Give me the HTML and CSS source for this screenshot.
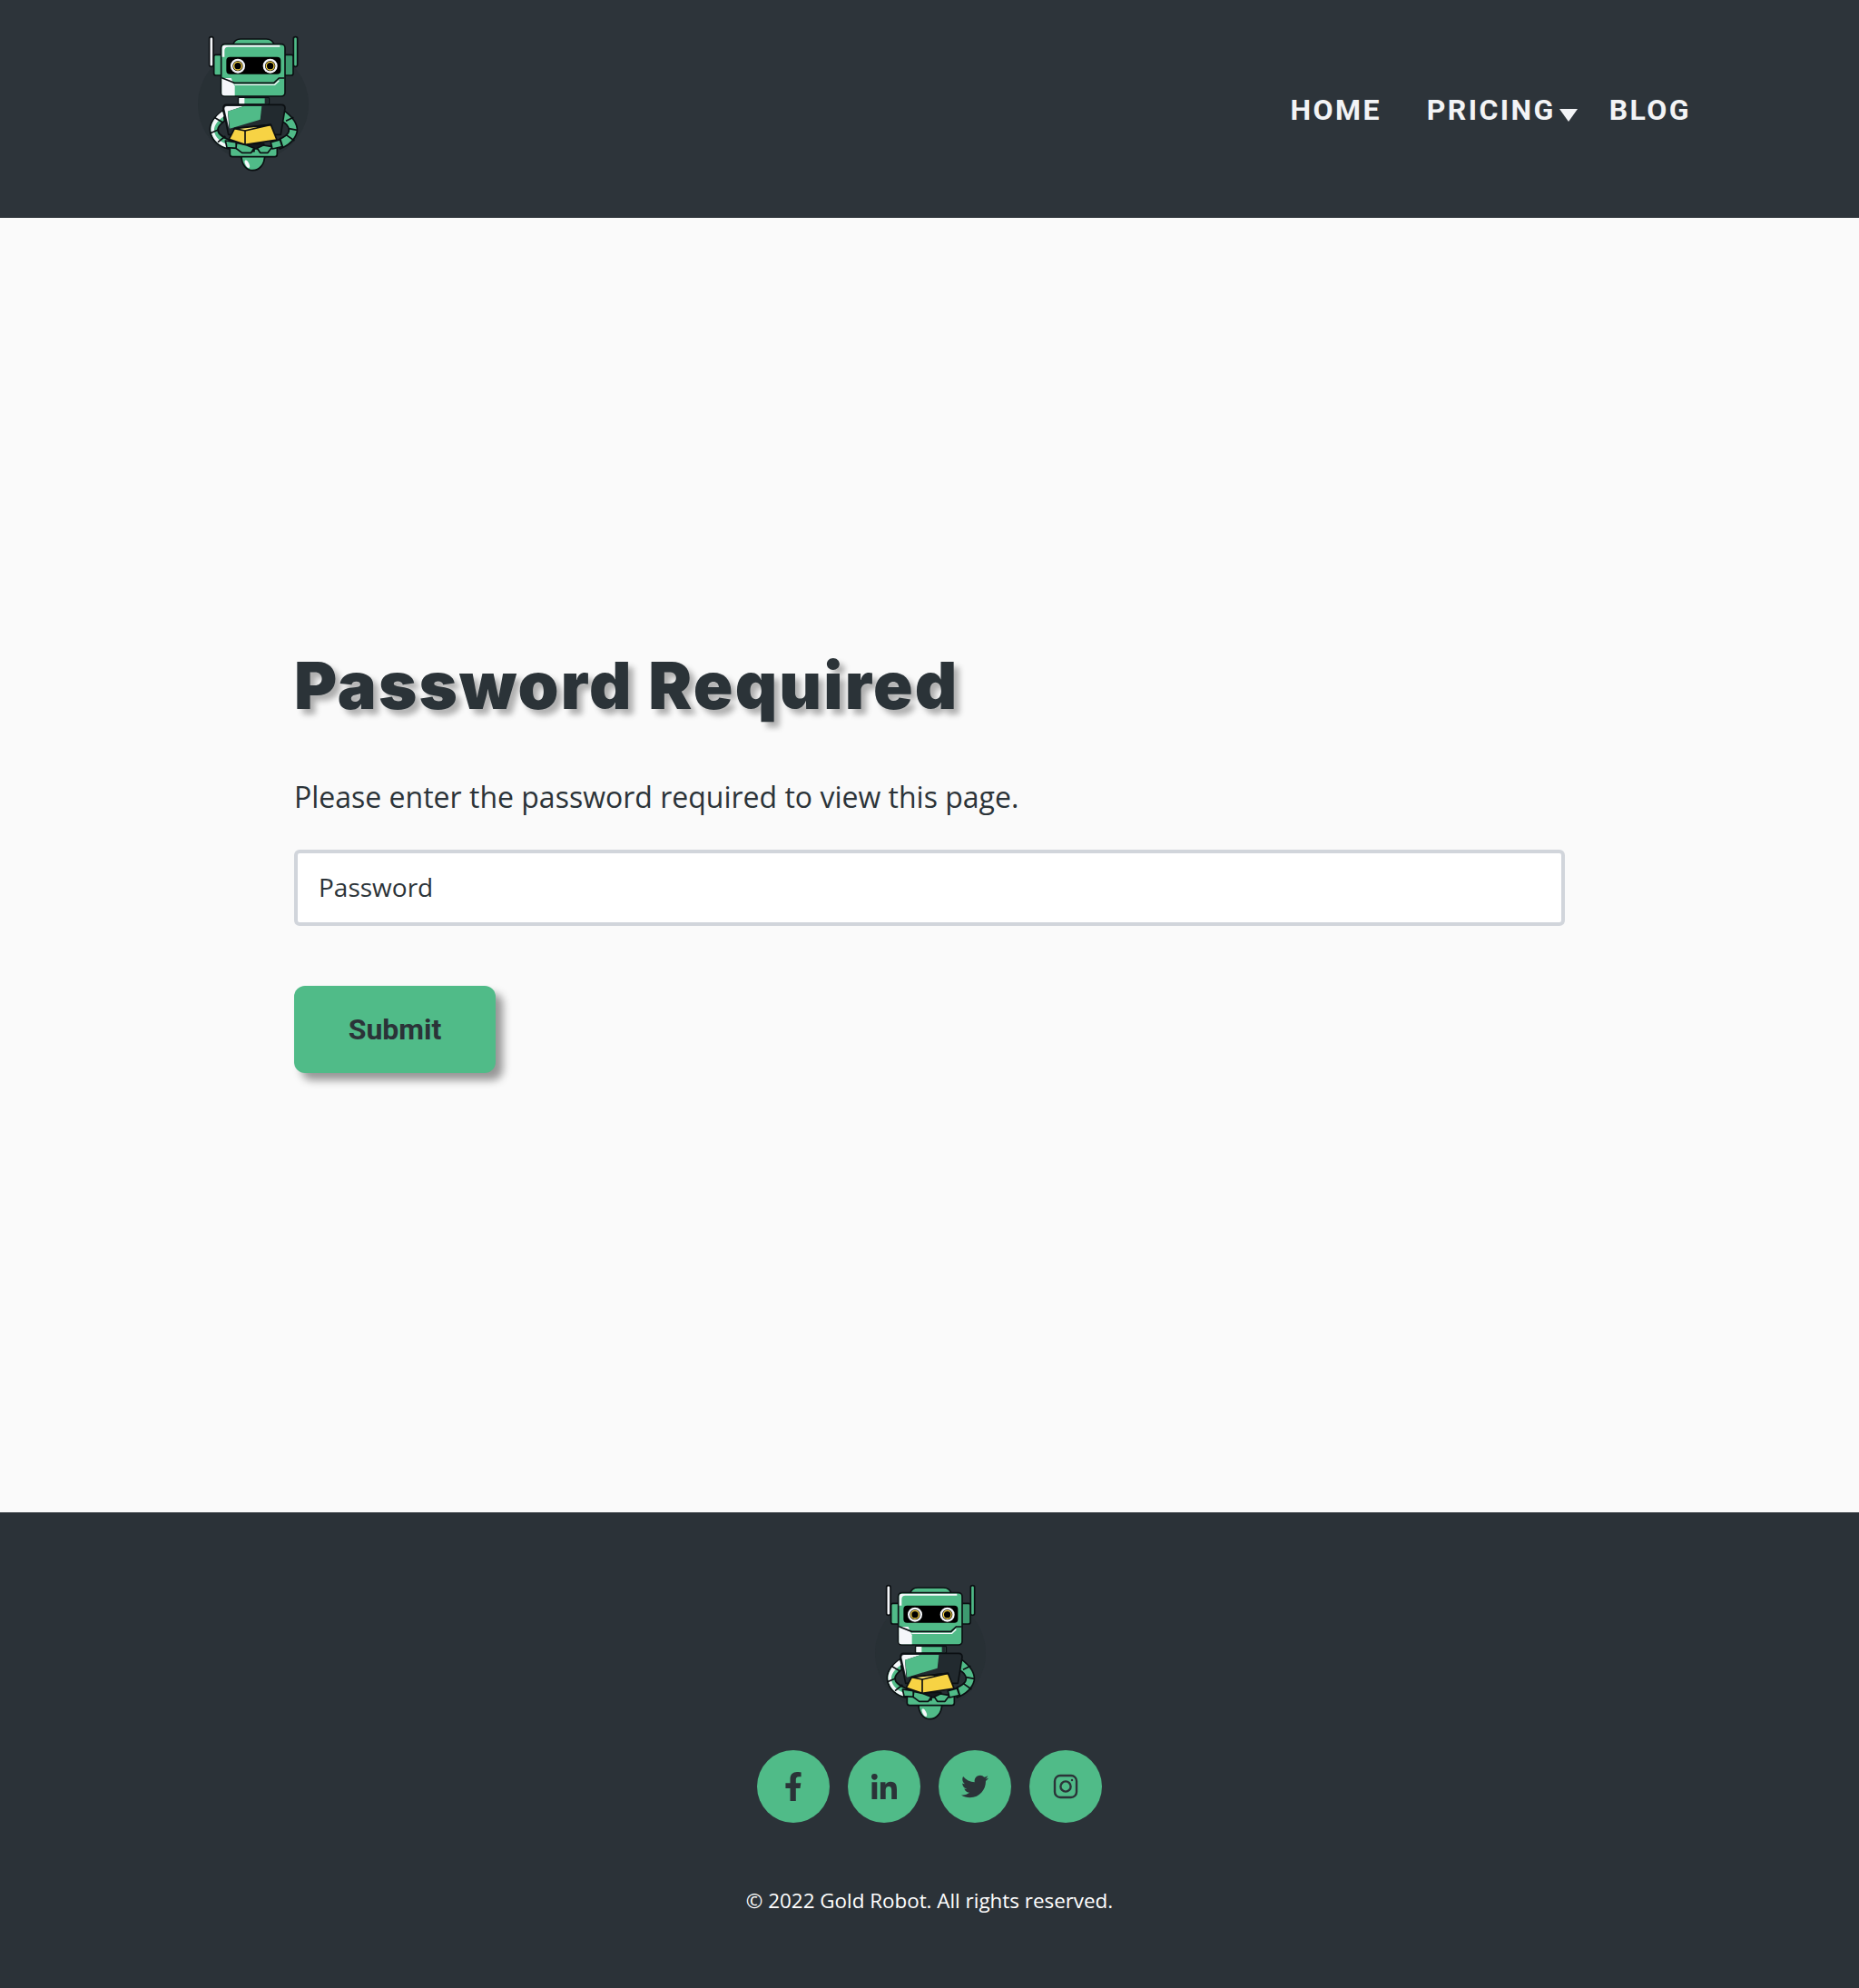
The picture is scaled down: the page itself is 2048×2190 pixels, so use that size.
FILE: index.html
```html
<!DOCTYPE html>
<html lang="en">
<head>
    <meta charset="UTF-8">
    <meta name="viewport" content="width=device-width, initial-scale=1.0">
    <title>Password Required - Gold Robot</title>
    <link rel="stylesheet" href="styles.css">
</head>
<body>

    <!-- Robot logo, used in the header and the footer -->
    <svg class="defs" width="0" height="0">
        <symbol id="robot" viewBox="0 0 540 540">
            <circle cx="267" cy="285" r="183" fill="#283035"/>
            <g stroke="#0b0f12" stroke-width="5" stroke-linejoin="round">
                <!-- antennas -->
                <rect x="122" y="62" width="13" height="98" rx="6" fill="#f5f7fa"/>
                <rect x="400" y="62" width="13" height="98" rx="6" fill="#50bb88"/>
                <!-- ears -->
                <rect x="137" y="121" width="30" height="68" rx="6" fill="#50bb88"/>
                <rect x="369" y="121" width="30" height="68" rx="6" fill="#3d9a70"/>
                <!-- head -->
                <path d="M200 88 Q205 69 225 69 H310 Q330 69 336 88 Z" fill="#50bb88"/>
                <rect x="161" y="86" width="211" height="172" rx="12" fill="#50bb88"/>
            </g>
            <path d="M164 128 V98 Q164 89 173 89 H355 V95 H184 Q172 95 172 107 V128 Z" fill="#f5f7fa"/>
            <path d="M163 198 H194 L206 226 V256 H170 Q163 256 163 249 Z" fill="#f5f7fa"/>
            <rect x="178" y="128" width="180" height="57" rx="12" fill="#000"/>
            <path d="M163 197 L205 214 H335 L352 198 H370" fill="none" stroke="#0b0f12" stroke-width="5"/>
            <path d="M205 220 H338 L352 206" fill="none" stroke="#f5f7fa" stroke-width="4"/>
            <!-- eyes -->
            <circle cx="216" cy="158" r="24" fill="#f5f7fa"/>
            <circle cx="216" cy="158" r="17" fill="#000"/>
            <circle cx="216" cy="158" r="13" fill="none" stroke="#f7d344" stroke-width="4"/>
            <circle cx="323" cy="158" r="24" fill="#f5f7fa"/>
            <circle cx="323" cy="158" r="17" fill="#000"/>
            <circle cx="323" cy="158" r="13" fill="none" stroke="#f7d344" stroke-width="4"/>
            <g stroke="#0b0f12" stroke-width="5" stroke-linejoin="round">
                <!-- neck -->
                <rect x="218" y="262" width="101" height="23" rx="4" fill="#50bb88"/>
                <path d="M220 264 H238 V283 H220 Z" fill="#f5f7fa" stroke="none"/>
                <path d="M305 264 H317 V283 H305 Z" fill="#222a2f" stroke="none"/>
                <!-- ball and pelvis -->
                <path d="M228 452 C226 520 305 520 305 452 Z" fill="#50bb88"/>
                <path d="M190 425 V450 Q190 458 198 458 H338 Q346 458 346 450 V425 Z" fill="#50bb88"/>
                <!-- arms -->
                <path d="M167 305 C140 325 120 350 125 375 C130 405 155 425 185 432 L192 405 C170 395 150 385 150 370 C150 355 165 345 172 340 Z" fill="#50bb88"/>
                <path d="M368 305 C395 325 415 350 412 375 C405 405 385 420 355 432 L345 405 C370 392 385 385 385 370 C385 355 370 345 360 340 Z" fill="#50bb88"/>
            </g>
            <path d="M165 308 C140 326 124 350 128 375 C133 405 158 423 183 429 L186 419 C160 410 140 395 138 372 C136 352 155 335 170 324 Z" fill="#f5f7fa"/>
            <path d="M138 328 L167 345 M125 380 L153 368 M150 410 L175 390 M180 430 L185 405 M375 340 L400 328 M385 365 L412 370 M375 385 L403 405 M355 395 L365 428" fill="none" stroke="#0b0f12" stroke-width="5"/>
            <!-- body -->
            <path d="M178 286 H360 Q372 286 372 298 L358 385 H185 L168 298 Q168 286 178 286 Z" fill="#222a2f" stroke="#0b0f12" stroke-width="5" stroke-linejoin="round"/>
            <path d="M172 300 Q172 291 180 291 H235 L183 308 L187 365 Z" fill="#f5f7fa"/>
            <path d="M183 308 L235 291 H295 L290 335 L190 365 Z" fill="#50bb88"/>
            <ellipse cx="247" cy="482" rx="6" ry="14" transform="rotate(-25 247 482)" fill="#f5f7fa"/>
            <g stroke="#0b0f12" stroke-width="5" stroke-linejoin="round">
                <!-- hands -->
                <path d="M240 415 H302 V432 H270 V440 H240 Z" fill="#141a1e"/>
                <path d="M175 405 L210 410 L213 430 L180 428 Z" fill="#50bb88"/>
                <path d="M210 430 L230 445 H260 L270 430 L240 418 L212 412 Z" fill="#50bb88"/>
                <path d="M280 430 L300 420 L330 425 L315 445 H290 Z" fill="#50bb88"/>
                <path d="M325 410 L355 402 L363 425 L330 432 Z" fill="#50bb88"/>
                <!-- gold bar -->
                <path d="M205 365 L325 352 L345 402 L240 418 L187 400 Z" fill="#f7d344"/>
                <path d="M205 365 L325 352 L240 372 Z" fill="#ffe873"/>
                <path d="M240 372 V418" fill="none"/>
            </g>
        </symbol>
    </svg>

    <header class="site-header">
        <a class="logo" href="#">
            <svg width="180" height="180"><use href="#robot"/></svg>
        </a>
        <nav class="main-nav">
            <a href="#">Home</a>
            <a class="has-menu" href="#">Pricing</a>
            <a href="#">Blog</a>
        </nav>
    </header>

    <main class="content">
        <h1>Password Required</h1>
        <p>Please enter the password required to view this page.</p>
        <form class="password-form">
            <input type="password" name="password" placeholder="Password">
            <button type="submit">Submit</button>
        </form>
    </main>

    <footer class="site-footer">
        <a class="logo" href="#">
            <svg width="180" height="180"><use href="#robot"/></svg>
        </a>
        <div class="social">
            <a href="#" aria-label="Facebook">
                <svg width="32" height="32" viewBox="0 0 512 512"><path transform="translate(96 0)" d="M279.14 288l14.22-92.66h-88.91v-60.13c0-25.35 12.42-50.06 52.24-50.06h40.42V6.26S260.43 0 225.36 0c-73.22 0-121.08 44.38-121.08 124.72v70.62H22.89V288h81.39v224h100.17V288z"/></svg>
            </a>
            <a href="#" aria-label="LinkedIn">
                <svg width="28" height="32" viewBox="0 0 448 512"><path d="M100.28 448H7.4V148.9h92.88zM53.79 108.1C24.09 108.1 0 83.5 0 53.8a53.79 53.79 0 0 1 107.58 0c0 29.7-24.1 54.3-53.79 54.3zM447.9 448h-92.68V302.4c0-34.7-.7-79.2-48.29-79.2-48.29 0-55.69 37.7-55.69 76.7V448h-92.78V148.9h89.08v40.8h1.3c12.4-23.5 42.69-48.3 87.88-48.3 94 0 111.28 61.9 111.28 142.3V448z" transform="translate(0 32)"/></svg>
            </a>
            <a href="#" aria-label="Twitter">
                <svg width="30" height="30" viewBox="0 0 512 512"><path d="M459.37 151.716c.325 4.548.325 9.097.325 13.645 0 138.72-105.583 298.558-298.558 298.558-59.452 0-114.68-17.219-161.137-47.106 8.447.974 16.568 1.299 25.34 1.299 49.055 0 94.213-16.568 130.274-44.832-46.132-.975-84.792-31.188-98.112-72.772 6.498.974 12.995 1.624 19.818 1.624 9.421 0 18.843-1.3 27.614-3.573-48.081-9.747-84.143-51.98-84.143-102.985v-1.299c13.969 7.797 30.214 12.67 47.431 13.319-28.264-18.843-46.781-51.005-46.781-87.391 0-19.492 5.197-37.36 14.294-52.954 51.655 63.675 129.3 105.258 216.365 109.807-1.624-7.797-2.599-15.918-2.599-24.04 0-57.828 46.782-104.934 104.934-104.934 30.213 0 57.502 12.67 76.67 33.137 23.715-4.548 46.456-13.32 66.599-25.34-7.798 24.366-24.366 44.833-46.132 57.827 21.117-2.273 41.584-8.122 60.426-16.243-14.292 20.791-32.161 39.308-52.628 54.253z"/></svg>
            </a>
            <a href="#" aria-label="Instagram">
                <svg width="28" height="28" viewBox="0 0 28 28" fill="none" stroke="#2b3338" stroke-width="2.4"><rect x="2" y="2" width="24" height="24" rx="6"/><circle cx="14" cy="14" r="5.6"/><circle cx="21" cy="7" r="1.2" fill="#2b3338" stroke="none"/></svg>
            </a>
        </div>
        <p class="copyright">© 2022 Gold Robot. All rights reserved.</p>
    </footer>

</body>
</html>
```

FILE: styles.css
```css
body {
    font-family: 'Open Sans', sans-serif;
    margin: 0;
    padding: 0;
    background-color: #fafafa;
    color: #2b3338;
}

.defs {
    position: absolute;
}

.logo {
    display: block;
    line-height: 0;
}

/* Header */
.site-header {
    height: 240px;
    box-sizing: border-box;
    padding: 20px 185px 0 190px;
    display: flex;
    justify-content: space-between;
    align-items: flex-start;
    background-color: #2d343a;
}

.main-nav {
    display: flex;
    gap: 50px;
    margin-top: 82px;
}

.main-nav a {
    font-family: 'Roboto', sans-serif;
    font-size: 32px;
    line-height: 38px;
    font-weight: 700;
    letter-spacing: 2.4px;
    text-transform: uppercase;
    text-decoration: none;
    color: #f3f4f6;
}

.main-nav .has-menu {
    position: relative;
    margin-right: 9px;
}

/* Dropdown arrow */
.main-nav .has-menu::after {
    content: "";
    position: absolute;
    top: 18px;
    left: 100%;
    margin-left: 4px;
    border-left: 10px solid transparent;
    border-right: 10px solid transparent;
    border-top: 14px solid #f3f4f6;
}

/* Main content */
.content {
    height: 1426px;
    box-sizing: border-box;
    padding: 470px 324px 0;
}

.content h1 {
    font-family: 'Inter', sans-serif;
    font-size: 72px;
    line-height: 90px;
    font-weight: 900;
    letter-spacing: 2.2px;
    margin: 0 0 56px;
    text-shadow: 6px 6px 6px rgba(0, 0, 0, 0.3);
}

.content p {
    font-size: 32px;
    line-height: 44px;
    margin: 0 0 36px;
}

.password-form input {
    display: block;
    width: 100%;
    height: 84px;
    box-sizing: border-box;
    padding: 0 23px 2px;
    margin-bottom: 66px;
    font-family: 'Open Sans', sans-serif;
    font-size: 28px;
    color: #2b3338;
    background-color: #fff;
    border: 4px solid #d1d5db;
    border-radius: 6px;
    outline: none;
}

.password-form input::placeholder {
    color: #2b3338;
    opacity: 1;
}

.password-form button {
    display: block;
    width: 222px;
    height: 96px;
    padding: 0;
    font-family: 'Roboto', sans-serif;
    font-size: 32px;
    font-weight: 700;
    color: #2b3338;
    background-color: #50bb88;
    border: none;
    border-radius: 12px;
    cursor: pointer;
    box-shadow: 8px 8px 10px rgba(0, 0, 0, 0.4);
}

/* Footer */
.site-footer {
    height: 524px;
    box-sizing: border-box;
    padding-top: 60px;
    display: flex;
    flex-direction: column;
    align-items: center;
    background-color: #2b3238;
}

.site-footer .logo {
    margin-left: 3px;
}

.social {
    display: flex;
    gap: 20px;
    margin-top: 22px;
}

.social a {
    width: 80px;
    height: 80px;
    border-radius: 50%;
    display: flex;
    align-items: center;
    justify-content: center;
    background-color: #50bb88;
}

.social svg {
    fill: #2b3338;
}

.social a:last-child svg {
    fill: none;
}

.copyright {
    font-size: 22.4px;
    line-height: 30px;
    margin: 71px 0 0;
    color: #fff;
}
```
